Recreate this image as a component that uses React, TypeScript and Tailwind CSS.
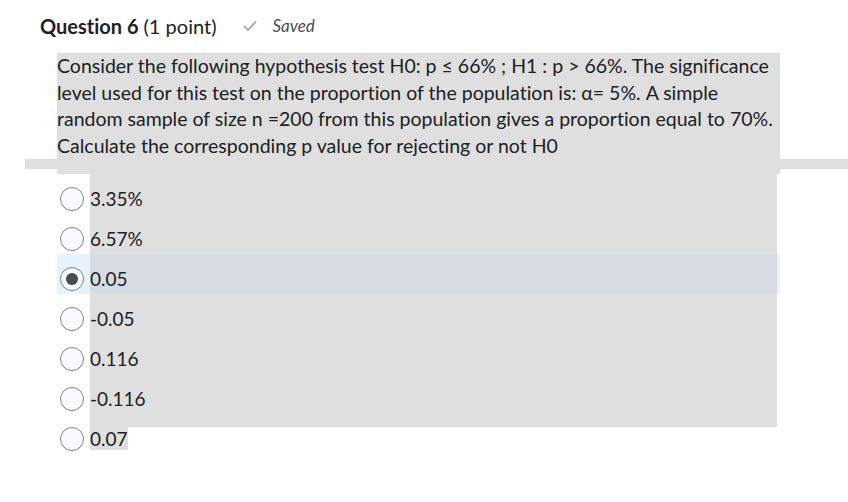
import React from "react";

const options = ["3.35%", "6.57%", "0.05", "-0.05", "0.116", "-0.116", "0.07"];

function Radio({ checked }: { checked: boolean }) {
  return (
    <div className="w-[24px] h-[24px] rounded-full border border-[#7c8186] bg-[#f9fafe] flex items-center justify-center">
      {checked && <div className="w-[12px] h-[12px] rounded-full bg-[#494c4e]" />}
    </div>
  );
}

export default function App() {
  return (
    <div className="w-[848px] h-[502px] bg-white text-[#202122] font-['Lato',sans-serif] [font-variant-ligatures:none] relative overflow-hidden">
      <div className="pl-[40px] pt-[14px] h-[53px] flex items-start">
        <div className="flex items-center h-[24px]">
          <span className="text-[20px] leading-[24px] font-bold">Question 6</span>
          <span className="text-[20px] leading-[24px] ml-[5px]">(1 point)</span>
          <svg className="ml-[27px]" width="14" height="12" viewBox="0 0 14 12">
            <path d="M1.5 6.5 L5 10 L12.5 2" fill="none" stroke="#a9b0b6" strokeWidth="2" strokeLinecap="round" strokeLinejoin="round" />
          </svg>
          <span className="ml-[15px] text-[17px] italic text-[#494c4e]">Saved</span>
        </div>
      </div>

      <div className="ml-[57px] w-[723px] bg-[#dfdfdf] text-[19.5px] leading-[26.6px]">
        Consider the following hypothesis test H0: p ≤ 66% ; H1 : p &gt; 66%. The significance level used for this test on the proportion of the population is: α= 5%. A simple random sample of size n =200 from this population gives a proportion equal to 70%. Calculate the corresponding p value for rejecting or not H0
      </div>
      <div className="ml-[25px] w-[823px] h-[10px] bg-[#dfdfdf]" />
      <div className="ml-[57px] w-[723px] h-[5px] bg-[#dfdfdf]" />

      <div className="ml-[57px] w-[723px] flex flex-col">
        {options.map((o, i) => {
          const checked = i === 2;
          const last = i === options.length - 1;
          return (
            <div key={o} className={`flex h-[40px] ${checked ? "bg-[#e6f2fc]" : ""}`}>
              <div className="w-[33px] pt-[13px] pl-[3px]">
                <Radio checked={checked} />
              </div>
              {last ? (
                <div className="w-[687px] flex flex-col">
                  <div className="h-[13px] bg-[#dfdfdf]" />
                  <div className="text-[19px] leading-[23px]">
                    <span className="bg-[#dfdfdf]">{o}</span>
                  </div>
                </div>
              ) : (
                <div className={`w-[687px] pt-[13px] text-[19px] leading-[23px] ${checked ? "bg-[#d6dce1]" : "bg-[#dfdfdf]"}`}>
                  {o}
                </div>
              )}
            </div>
          );
        })}
      </div>
    </div>
  );
}
